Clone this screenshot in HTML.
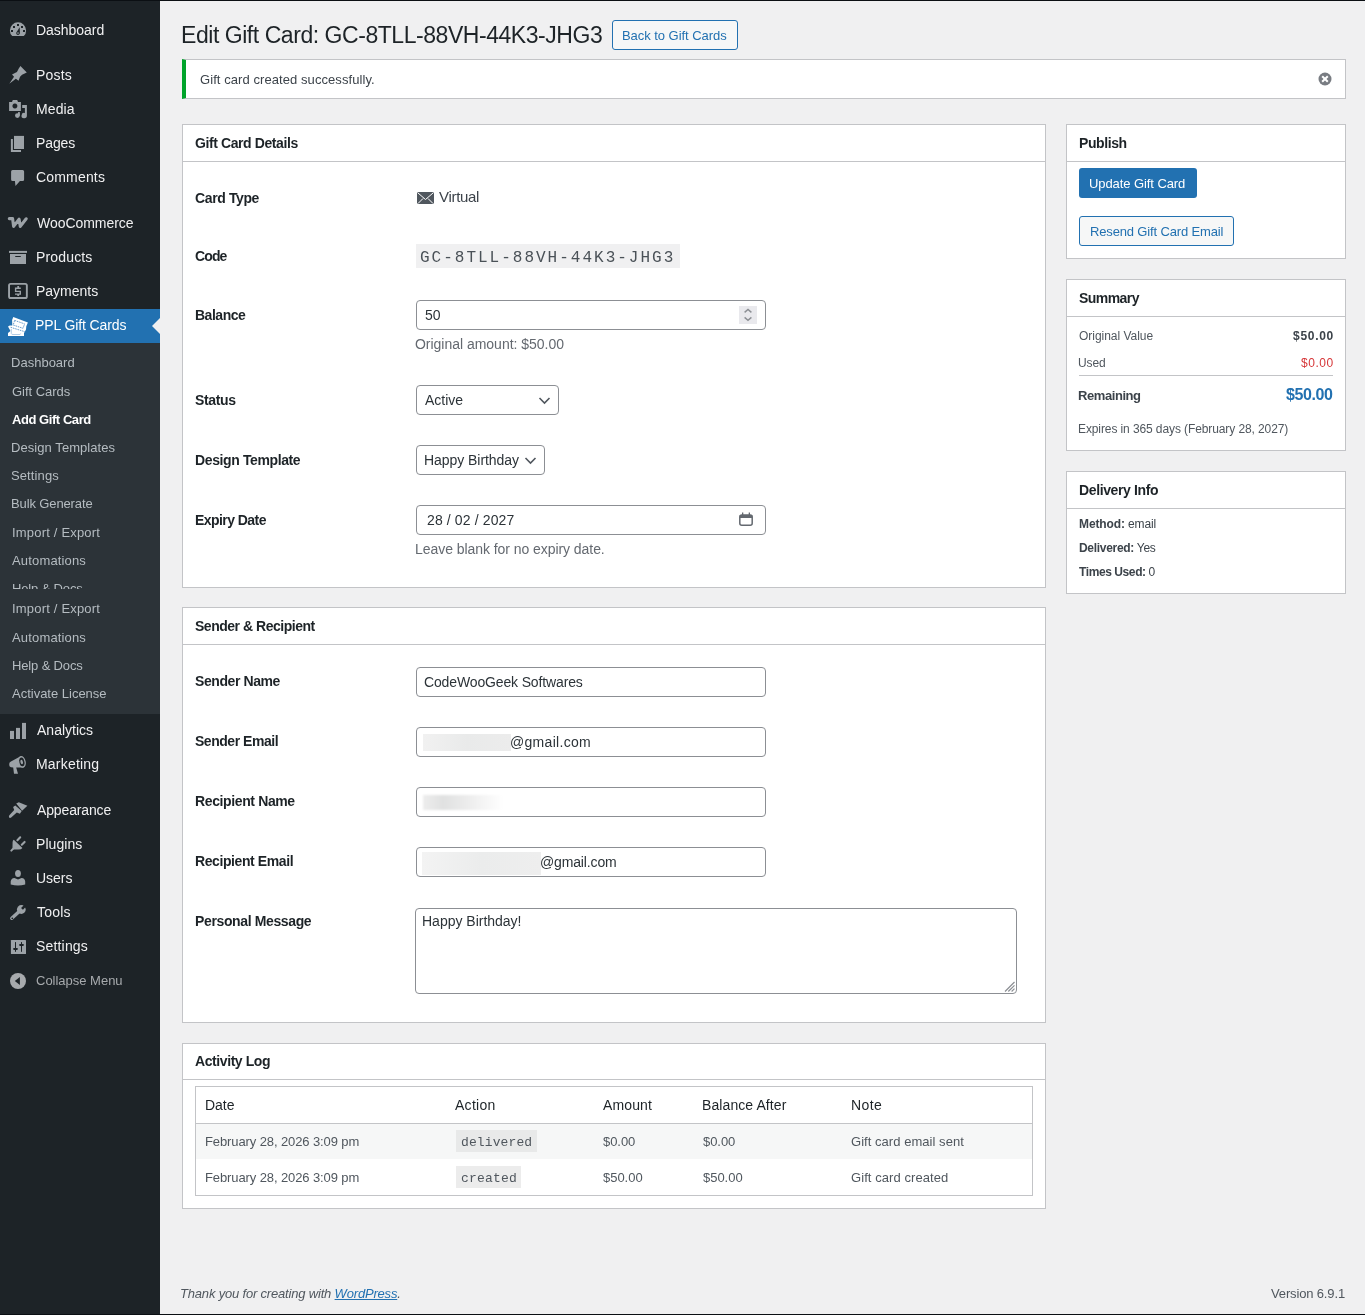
<!DOCTYPE html>
<html><head><meta charset="utf-8"><title>Edit Gift Card</title>
<style>
html,body{margin:0;padding:0}
body{width:1365px;height:1315px;position:relative;overflow:hidden;background:#f0f0f1;font-family:'Liberation Sans',sans-serif}
.t{position:absolute;white-space:nowrap}
.r{position:absolute;box-sizing:border-box}
#root{position:absolute;left:0;top:0;width:1365px;height:1315px;overflow:hidden;background:#f0f0f1;will-change:transform}
</style></head><body><div id="root">
<div class="r" style="left:0px;top:0px;width:160px;height:1315px;background:#1d2327"></div>
<div class="r" style="left:0px;top:309px;width:160px;height:34px;background:#2271b1"></div>
<svg class="r" style="left:152px;top:318px" width="8" height="16" viewBox="0 0 8 16"><path d="M8 0 L0 8 L8 16Z" fill="#f0f0f1"/></svg>
<div class="r" style="left:0px;top:343px;width:160px;height:371px;background:#2c3338"></div>
<div class="t" style="left:36px;top:20px;font:normal 14px/20px 'Liberation Sans',sans-serif;color:#f0f0f1;letter-spacing:-0.024px;">Dashboard</div>
<div class="t" style="left:36px;top:65px;font:normal 14px/20px 'Liberation Sans',sans-serif;color:#f0f0f1;letter-spacing:0.182px;">Posts</div>
<div class="t" style="left:36px;top:99px;font:normal 14px/20px 'Liberation Sans',sans-serif;color:#f0f0f1;letter-spacing:0.115px;">Media</div>
<div class="t" style="left:36px;top:133px;font:normal 14px/20px 'Liberation Sans',sans-serif;color:#f0f0f1;letter-spacing:-0.096px;">Pages</div>
<div class="t" style="left:36px;top:167px;font:normal 14px/20px 'Liberation Sans',sans-serif;color:#f0f0f1;letter-spacing:0.175px;">Comments</div>
<div class="t" style="left:37px;top:213px;font:normal 14px/20px 'Liberation Sans',sans-serif;color:#f0f0f1;letter-spacing:-0.051px;">WooCommerce</div>
<div class="t" style="left:36px;top:247px;font:normal 14px/20px 'Liberation Sans',sans-serif;color:#f0f0f1;letter-spacing:0.155px;">Products</div>
<div class="t" style="left:36px;top:281px;font:normal 14px/20px 'Liberation Sans',sans-serif;color:#f0f0f1;letter-spacing:-0.003px;">Payments</div>
<div class="t" style="left:37px;top:720px;font:normal 14px/20px 'Liberation Sans',sans-serif;color:#f0f0f1;letter-spacing:0.007px;">Analytics</div>
<div class="t" style="left:36px;top:754px;font:normal 14px/20px 'Liberation Sans',sans-serif;color:#f0f0f1;letter-spacing:0.201px;">Marketing</div>
<div class="t" style="left:37px;top:800px;font:normal 14px/20px 'Liberation Sans',sans-serif;color:#f0f0f1;letter-spacing:-0.139px;">Appearance</div>
<div class="t" style="left:36px;top:834px;font:normal 14px/20px 'Liberation Sans',sans-serif;color:#f0f0f1;letter-spacing:0.055px;">Plugins</div>
<div class="t" style="left:36px;top:868px;font:normal 14px/20px 'Liberation Sans',sans-serif;color:#f0f0f1;letter-spacing:-0.034px;">Users</div>
<div class="t" style="left:37px;top:902px;font:normal 14px/20px 'Liberation Sans',sans-serif;color:#f0f0f1;letter-spacing:0.216px;">Tools</div>
<div class="t" style="left:36px;top:936px;font:normal 14px/20px 'Liberation Sans',sans-serif;color:#f0f0f1;letter-spacing:0.173px;">Settings</div>
<div class="t" style="left:35px;top:315px;font:normal 14px/20px 'Liberation Sans',sans-serif;color:#fff;letter-spacing:-0.099px;">PPL Gift Cards</div>
<div class="t" style="left:36px;top:971px;font:normal 13px/20px 'Liberation Sans',sans-serif;color:#a7aaad;letter-spacing:-0.01px;">Collapse Menu</div>
<div class="t" style="left:11px;top:353px;font:normal 13px/20px 'Liberation Sans',sans-serif;color:#b5bcc1;letter-spacing:0.011px;">Dashboard</div>
<div class="t" style="left:12px;top:382px;font:normal 13px/20px 'Liberation Sans',sans-serif;color:#b5bcc1;letter-spacing:-0.04px;">Gift Cards</div>
<div class="t" style="left:12px;top:410px;font:bold 13px/20px 'Liberation Sans',sans-serif;color:#fff;letter-spacing:-0.441px;">Add Gift Card</div>
<div class="t" style="left:11px;top:438px;font:normal 13px/20px 'Liberation Sans',sans-serif;color:#b5bcc1;letter-spacing:0.067px;">Design Templates</div>
<div class="t" style="left:11px;top:466px;font:normal 13px/20px 'Liberation Sans',sans-serif;color:#b5bcc1;letter-spacing:0.106px;">Settings</div>
<div class="t" style="left:11px;top:494px;font:normal 13px/20px 'Liberation Sans',sans-serif;color:#b5bcc1;letter-spacing:-0.12px;">Bulk Generate</div>
<div class="t" style="left:12px;top:523px;font:normal 13px/20px 'Liberation Sans',sans-serif;color:#b5bcc1;letter-spacing:0.19px;">Import / Export</div>
<div class="t" style="left:12px;top:551px;font:normal 13px/20px 'Liberation Sans',sans-serif;color:#b5bcc1;letter-spacing:0.161px;">Automations</div>
<div class="t" style="left:12px;top:599px;font:normal 13px/20px 'Liberation Sans',sans-serif;color:#b5bcc1;letter-spacing:0.19px;">Import / Export</div>
<div class="t" style="left:12px;top:628px;font:normal 13px/20px 'Liberation Sans',sans-serif;color:#b5bcc1;letter-spacing:0.161px;">Automations</div>
<div class="t" style="left:12px;top:656px;font:normal 13px/20px 'Liberation Sans',sans-serif;color:#b5bcc1;letter-spacing:-0.144px;">Help &amp; Docs</div>
<div class="t" style="left:12px;top:684px;font:normal 13px/20px 'Liberation Sans',sans-serif;color:#b5bcc1;letter-spacing:-0.006px;">Activate License</div>
<div class="r" style="left:0;top:575px;width:160px;height:14px;overflow:hidden">
<div class="t" style="left:12px;top:4px;font:normal 13px/20px 'Liberation Sans',sans-serif;color:#b5bcc1;letter-spacing:-0.144px;">Help &amp; Docs</div>
</div>
<svg class="r" style="left:0;top:0" width="160" height="1000" viewBox="0 0 160 1000">
<path d="M12.2 36.1 A8.1 8.1 0 1 1 23.8 36.1 Z" fill="#9ca2a7"/>
<rect x="11" y="30" width="2" height="2" fill="#1d2327"/><rect x="13" y="26" width="2" height="2" fill="#1d2327"/>
<rect x="17" y="24" width="2" height="2" fill="#1d2327"/><rect x="21" y="26" width="2" height="2" fill="#1d2327"/><rect x="23" y="30" width="2" height="2" fill="#1d2327"/>
<path d="M19.7 27.2 L19.9 33.2 Q19.5 35 18 35 Q16.3 35 16.2 33.2 Q16.3 32.2 17 31.4 Z" fill="#1d2327"/><circle cx="18" cy="33.1" r="0.8" fill="#9ca2a7"/>
<path d="M20.42 66.1 L26.8 72.49 L22.06 74.68 L20.05 76.87 L18.59 80.7 L15.85 78.69 L9.3 83.7 L14.03 76.87 L12.02 74.4 L16.95 72.12 L18.77 68.47 Z" fill="#9ca2a7"/>
<path d="M9.1 102.1 L12 102.1 L12.8 100.1 L17.2 100.1 L18 102.1 L20.9 102.1 L20.9 110.9 L9.1 110.9 Z M14.9 103.4 A2.5 2.5 0 1 0 14.91 103.4 Z" fill="#9ca2a7" fill-rule="evenodd"/>
<path d="M22.2 105 L26.9 105 L26.9 115.6 A2.7 2.7 0 1 1 24.9 113 L24.9 108 L22.2 108 Z" fill="#9ca2a7"/>
<circle cx="17.4" cy="115.6" r="2.4" fill="#9ca2a7"/><rect x="18" y="112.1" width="1.9" height="3.5" fill="#9ca2a7"/>
<rect x="14" y="135.9" width="10" height="13.1" fill="#9ca2a7"/><path d="M10.9 138.9 L12.9 138.9 L12.9 150 L21 150 L21 152 L10.9 152 Z" fill="#9ca2a7"/>
<path d="M12.6 169.9 L22.6 169.9 Q24.1 169.9 24.1 171.4 L24.1 179.4 Q24.1 180.9 22.6 180.9 L19.9 180.9 L15.5 185.9 L14.9 180.9 L12.6 180.9 Q11.1 180.9 11.1 179.4 L11.1 171.4 Q11.1 169.9 12.6 169.9 Z" fill="#9ca2a7"/>
<path d="M9.3 218.6 L12.6 218.6 L13.6 226.4 L19.1 219.2 L20.3 226.4 L26.2 218.8" stroke="#9ca2a7" stroke-width="3.1" fill="none" stroke-linecap="round" stroke-linejoin="round"/>
<rect x="9" y="250.9" width="18" height="2" fill="#9ca2a7"/><rect x="10" y="254" width="16" height="10" fill="#9ca2a7"/><rect x="15.1" y="256" width="5.8" height="1.1" rx="0.5" fill="#1d2327"/>
<rect x="9.05" y="283.85" width="17.8" height="14.2" rx="1.6" fill="none" stroke="#9ca2a7" stroke-width="1.9"/>
<path d="M20.8 288.2 L15.6 288.2 L15.6 291.4 L20.3 291.4 L20.3 294.1 L15 294.1" stroke="#9ca2a7" stroke-width="1.4" fill="none"/>
<rect x="17.3" y="286" width="1.8" height="2" fill="#9ca2a7"/><rect x="17.3" y="294" width="1.8" height="2" fill="#9ca2a7"/>
<path d="M13.3 317.1 L27.9 322.6 L26.3 326.2 L26 329.5 L24.5 332.3 L24 333 L24 336 L8 336 L8 333 L10.5 331 L8 326.6 L9.8 325.6 L12.3 325.5 L12.1 320 Z" fill="#fff"/>
<path d="M14.6 320.4 L24.6 323.9 L23 328.3 L13.2 325 Z" fill="none" stroke="#5b93c7" stroke-width="0.9" stroke-dasharray="1.6 0.8"/>
<path d="M10.6 327.3 L25.2 331.8" stroke="#5b93c7" stroke-width="0.9" stroke-dasharray="1.6 0.8"/>
<path d="M11.3 329 L11.3 333.5 Q11.5 334.5 13 334.5 L20 334.5 Q20.5 334.3 20.6 333.6" fill="none" stroke="#a9c6e2" stroke-width="0.9"/>
<rect x="10" y="730.9" width="4" height="8.1" fill="#9ca2a7"/><rect x="16" y="727.9" width="4" height="11.1" fill="#9ca2a7"/><rect x="22" y="722.9" width="4" height="16.1" fill="#9ca2a7"/>
<path d="M9.4 763 Q9.6 762 11 761.4 L20.6 756.3 L23.6 767.6 L16.2 767.5 L18 773.8 L14 773.8 L13.2 767.4 L11 767.2 Q9.3 766.8 9.2 765 Z" fill="#9ca2a7"/>
<ellipse cx="22" cy="761.9" rx="3.7" ry="6" transform="rotate(-12 22 761.9)" fill="#9ca2a7"/>
<ellipse cx="21.9" cy="761.9" rx="2.5" ry="4.4" transform="rotate(-12 21.9 761.9)" fill="#1d2327"/>
<ellipse cx="21.7" cy="761.9" rx="1.2" ry="2.3" transform="rotate(-12 21.7 761.9)" fill="#9ca2a7"/>
<path d="M16.2 803.5 L18.8 802.2 L27.4 805.7 L22.1 810.8 Z" fill="#9ca2a7"/>
<path d="M13.1 807.1 L15.3 805.4 L21.7 811 L19.9 813.7 L16.8 812.6 L11.2 817.6 Q9.6 818.4 9 817.2 Q8.6 816 9.6 815 L14.2 810 Z" fill="#9ca2a7"/>
<path d="M13.8 839.7 L22.4 847.9 Q21.4 849.4 18.5 849.6 L13 849.6 Q12.4 849 12.5 847 L12.6 842 Q12.8 840.3 13.8 839.7 Z" fill="#9ca2a7"/>
<path d="M13.2 848.6 L11.3 850.6" stroke="#9ca2a7" stroke-width="2" stroke-linecap="round"/>
<path d="M17.4 840.2 L20.2 837.3 M21.8 844.7 L24.6 841.9" stroke="#9ca2a7" stroke-width="2.1" stroke-linecap="round"/>
<ellipse cx="18" cy="873.5" rx="2.9" ry="3.5" fill="#9ca2a7"/>
<path d="M10.7 884.6 L10.7 881.5 Q11 878.2 14.5 877.9 L18 879.6 L21.5 877.9 Q25 878.2 25.2 881.5 L25.2 884.6 Q18 886.4 10.7 884.6 Z" fill="#9ca2a7"/>
<path d="M11.8 918.3 L19.2 911.5" stroke="#9ca2a7" stroke-width="3.4" stroke-linecap="round"/>
<circle cx="21.3" cy="909.5" r="4.4" fill="#9ca2a7"/>
<path d="M21.08 907.88 L24.3 904.66 L26.14 906.5 L22.92 909.72 Z" fill="#1d2327"/>
<circle cx="12.3" cy="918.3" r="0.9" fill="#1d2327"/>
<rect x="10.9" y="939.9" width="15.1" height="14.1" rx="0.6" fill="#9ca2a7"/>
<rect x="15" y="942.1" width="1" height="9.7" fill="#1d2327"/><rect x="13.1" y="948.1" width="4.8" height="1.8" rx="0.8" fill="#1d2327"/>
<rect x="21" y="942.1" width="1" height="9.7" fill="#1d2327"/><rect x="19.1" y="944.1" width="4.8" height="1.8" rx="0.8" fill="#1d2327"/>
<circle cx="18" cy="981" r="8" fill="#a7aaad"/><path d="M14.8 981 L19.9 977 L19.9 984.9 Z" fill="#1d2327"/>
</svg>
<div class="r" style="left:0px;top:0px;width:1365px;height:1px;background:#0b0f13"></div>
<div class="r" style="left:0px;top:1314px;width:1365px;height:1px;background:#0b0f13"></div>
<div class="t" style="left:181px;top:25px;font:normal 23px/20px 'Liberation Sans',sans-serif;color:#1d2327;letter-spacing:-0.451px;">Edit Gift Card: GC-8TLL-88VH-44K3-JHG3</div>
<div class="r" style="left:612px;top:20px;width:126px;height:30px;border:1px solid #2271b1;border-radius:3px;background:#f6f7f7"></div>
<div class="t" style="left:622px;top:26px;font:normal 13px/20px 'Liberation Sans',sans-serif;color:#2271b1;letter-spacing:-0.049px;">Back to Gift Cards</div>
<div class="r" style="left:182px;top:59px;width:1164px;height:40px;background:#fff;border:1px solid #c3c4c7;border-left:4px solid #00a32a"></div>
<div class="t" style="left:200px;top:70px;font:normal 13px/20px 'Liberation Sans',sans-serif;color:#3c434a;letter-spacing:0.073px;">Gift card created successfully.</div>
<svg class="r" style="left:1318px;top:72px" width="14" height="14" viewBox="0 0 14 14"><circle cx="7" cy="7" r="6.5" fill="#787c82"/><path d="M4.2 4.2 L9.8 9.8 M9.8 4.2 L4.2 9.8" stroke="#fff" stroke-width="2"/></svg>
<div class="r" style="left:182px;top:124px;width:864px;height:464px;background:#fff;border:1px solid #c3c4c7"></div>
<div class="r" style="left:182px;top:161px;width:864px;height:1px;background:#c3c4c7"></div>
<div class="t" style="left:195px;top:133px;font:bold 14px/20px 'Liberation Sans',sans-serif;color:#1d2327;letter-spacing:-0.406px;">Gift Card Details</div>
<div class="t" style="left:195px;top:188px;font:bold 14px/20px 'Liberation Sans',sans-serif;color:#1d2327;letter-spacing:-0.382px;">Card Type</div>
<div class="t" style="left:195px;top:246px;font:bold 14px/20px 'Liberation Sans',sans-serif;color:#1d2327;letter-spacing:-0.863px;">Code</div>
<div class="t" style="left:195px;top:305px;font:bold 14px/20px 'Liberation Sans',sans-serif;color:#1d2327;letter-spacing:-0.486px;">Balance</div>
<div class="t" style="left:195px;top:390px;font:bold 14px/20px 'Liberation Sans',sans-serif;color:#1d2327;letter-spacing:-0.373px;">Status</div>
<div class="t" style="left:195px;top:450px;font:bold 14px/20px 'Liberation Sans',sans-serif;color:#1d2327;letter-spacing:-0.383px;">Design Template</div>
<div class="t" style="left:195px;top:510px;font:bold 14px/20px 'Liberation Sans',sans-serif;color:#1d2327;letter-spacing:-0.557px;">Expiry Date</div>
<svg class="r" style="left:417px;top:192px" width="17" height="12" viewBox="0 0 17 12"><rect x="0" y="0" width="17" height="12" rx="1.5" fill="#50575e"/><path d="M1 1 L8.5 7.5 L16 1 M1 11.5 L6 6.5 M16 11.5 L11 6.5" stroke="#fff" stroke-width="1" fill="none"/></svg>
<div class="t" style="left:439px;top:187px;font:normal 15px/20px 'Liberation Sans',sans-serif;color:#3c434a;letter-spacing:-0.31px;">Virtual</div>
<div class="r" style="left:416px;top:244px;width:264px;height:24px;background:#f0f0f1"></div>
<div class="t" style="left:420px;top:248px;font:normal 16px/20px 'Liberation Mono',monospace;color:#4a5157;letter-spacing:2px">GC-8TLL-88VH-44K3-JHG3</div>
<div class="r" style="left:416px;top:300px;width:350px;height:30px;background:#fff;border:1px solid #8c8f94;border-radius:4px"></div>
<div class="t" style="left:425px;top:305px;font:normal 14px/20px 'Liberation Sans',sans-serif;color:#2c3338;">50</div>
<div class="r" style="left:739px;top:306px;width:18px;height:18px;background:#e9e9ed"></div>
<svg class="r" style="left:739px;top:306px" width="18" height="18" viewBox="0 0 18 18"><path d="M5.6 6.4 L9 3.5 L12.4 6.4 M5.6 11.4 L9 14.3 L12.4 11.4" stroke="#8c8f94" stroke-width="1.4" fill="none"/></svg>
<div class="t" style="left:415px;top:334px;font:normal 14px/20px 'Liberation Sans',sans-serif;color:#646970;letter-spacing:-0.021px;">Original amount: $50.00</div>
<div class="r" style="left:416px;top:385px;width:143px;height:30px;background:#fff;border:1px solid #8c8f94;border-radius:4px"></div>
<div class="t" style="left:425px;top:390px;font:normal 14px/20px 'Liberation Sans',sans-serif;color:#2c3338;">Active</div>
<svg class="r" style="left:538px;top:396px" width="13" height="9" viewBox="0 0 13 9"><path d="M1.5 2 L6.5 7 L11.5 2" stroke="#50575e" stroke-width="1.6" fill="none"/></svg>
<div class="r" style="left:416px;top:445px;width:129px;height:30px;background:#fff;border:1px solid #8c8f94;border-radius:4px"></div>
<div class="t" style="left:424px;top:450px;font:normal 14px/20px 'Liberation Sans',sans-serif;color:#2c3338;letter-spacing:-0.052px;">Happy Birthday</div>
<svg class="r" style="left:524px;top:456px" width="13" height="9" viewBox="0 0 13 9"><path d="M1.5 2 L6.5 7 L11.5 2" stroke="#50575e" stroke-width="1.6" fill="none"/></svg>
<div class="r" style="left:416px;top:505px;width:350px;height:30px;background:#fff;border:1px solid #8c8f94;border-radius:4px"></div>
<div class="t" style="left:427px;top:510px;font:normal 14px/20px 'Liberation Sans',sans-serif;color:#2c3338;letter-spacing:0.124px;">28 / 02 / 2027</div>
<svg class="r" style="left:739px;top:512px" width="14" height="14" viewBox="0 0 14 14"><rect x="0.8" y="3" width="12.4" height="10.2" rx="2" fill="none" stroke="#646970" stroke-width="1.5"/><rect x="0.8" y="3" width="12.4" height="3" fill="#646970"/><rect x="3" y="0.5" width="1.3" height="3" fill="#646970"/><rect x="9.7" y="0.5" width="1.3" height="3" fill="#646970"/></svg>
<div class="t" style="left:415px;top:539px;font:normal 14px/20px 'Liberation Sans',sans-serif;color:#646970;letter-spacing:-0.057px;">Leave blank for no expiry date.</div>
<div class="r" style="left:182px;top:607px;width:864px;height:416px;background:#fff;border:1px solid #c3c4c7"></div>
<div class="r" style="left:182px;top:644px;width:864px;height:1px;background:#c3c4c7"></div>
<div class="t" style="left:195px;top:616px;font:bold 14px/20px 'Liberation Sans',sans-serif;color:#1d2327;letter-spacing:-0.479px;">Sender &amp; Recipient</div>
<div class="t" style="left:195px;top:671px;font:bold 14px/20px 'Liberation Sans',sans-serif;color:#1d2327;letter-spacing:-0.413px;">Sender Name</div>
<div class="t" style="left:195px;top:731px;font:bold 14px/20px 'Liberation Sans',sans-serif;color:#1d2327;letter-spacing:-0.47px;">Sender Email</div>
<div class="t" style="left:195px;top:791px;font:bold 14px/20px 'Liberation Sans',sans-serif;color:#1d2327;letter-spacing:-0.375px;">Recipient Name</div>
<div class="t" style="left:195px;top:851px;font:bold 14px/20px 'Liberation Sans',sans-serif;color:#1d2327;letter-spacing:-0.41px;">Recipient Email</div>
<div class="t" style="left:195px;top:911px;font:bold 14px/20px 'Liberation Sans',sans-serif;color:#1d2327;letter-spacing:-0.368px;">Personal Message</div>
<div class="r" style="left:416px;top:667px;width:350px;height:30px;background:#fff;border:1px solid #8c8f94;border-radius:4px"></div>
<div class="r" style="left:416px;top:727px;width:350px;height:30px;background:#fff;border:1px solid #8c8f94;border-radius:4px"></div>
<div class="r" style="left:416px;top:787px;width:350px;height:30px;background:#fff;border:1px solid #8c8f94;border-radius:4px"></div>
<div class="r" style="left:416px;top:847px;width:350px;height:30px;background:#fff;border:1px solid #8c8f94;border-radius:4px"></div>
<div class="t" style="left:424px;top:672px;font:normal 14px/20px 'Liberation Sans',sans-serif;color:#2c3338;letter-spacing:-0.14px;">CodeWooGeek Softwares</div>
<div class="r" style="left:423px;top:734px;width:88px;height:17px;background:linear-gradient(90deg,#f1f1f1,#e9eaea 50%,#ececec);filter:blur(0.6px)"></div>
<div class="t" style="left:510px;top:732px;font:normal 14px/20px 'Liberation Sans',sans-serif;color:#2c3338;letter-spacing:0.308px;">@gmail.com</div>
<div class="r" style="left:423px;top:795px;width:80px;height:15px;background:linear-gradient(90deg,#ededed,#e0e1e1 25%,#ececec 55%,#fff 100%);filter:blur(1px)"></div>
<div class="r" style="left:422px;top:852px;width:119px;height:23px;background:linear-gradient(90deg,#f3f3f3,#ebecec 50%,#eeeeee);filter:blur(0.6px)"></div>
<div class="t" style="left:540px;top:852px;font:normal 14px/20px 'Liberation Sans',sans-serif;color:#2c3338;letter-spacing:-0.147px;">@gmail.com</div>
<div class="r" style="left:415px;top:908px;width:602px;height:86px;background:#fff;border:1px solid #8c8f94;border-radius:4px"></div>
<div class="t" style="left:422px;top:911px;font:normal 14px/20px 'Liberation Sans',sans-serif;color:#2c3338;letter-spacing:-0.008px;">Happy Birthday!</div>
<svg class="r" style="left:1003px;top:980px" width="12" height="12" viewBox="0 0 12 12"><path d="M11.5 2 L2 11.5 M11.5 5.3 L5.3 11.5 M11.5 8.6 L8.6 11.5" stroke="#8c8f94" stroke-width="1.2" fill="none"/></svg>
<div class="r" style="left:182px;top:1043px;width:864px;height:166px;background:#fff;border:1px solid #c3c4c7"></div>
<div class="r" style="left:182px;top:1079px;width:864px;height:1px;background:#c3c4c7"></div>
<div class="t" style="left:195px;top:1051px;font:bold 14px/20px 'Liberation Sans',sans-serif;color:#1d2327;letter-spacing:-0.416px;">Activity Log</div>
<div class="r" style="left:195px;top:1086px;width:838px;height:110px;border:1px solid #c3c4c7;background:#fff"></div>
<div class="r" style="left:196px;top:1123px;width:836px;height:1px;background:#c3c4c7"></div>
<div class="r" style="left:196px;top:1124px;width:836px;height:35px;background:#f6f7f7"></div>
<div class="t" style="left:205px;top:1095px;font:normal 14px/20px 'Liberation Sans',sans-serif;color:#1d2327;letter-spacing:-0.025px;">Date</div>
<div class="t" style="left:455px;top:1095px;font:normal 14px/20px 'Liberation Sans',sans-serif;color:#1d2327;letter-spacing:0.269px;">Action</div>
<div class="t" style="left:603px;top:1095px;font:normal 14px/20px 'Liberation Sans',sans-serif;color:#1d2327;letter-spacing:0.122px;">Amount</div>
<div class="t" style="left:702px;top:1095px;font:normal 14px/20px 'Liberation Sans',sans-serif;color:#1d2327;letter-spacing:0.091px;">Balance After</div>
<div class="t" style="left:851px;top:1095px;font:normal 14px/20px 'Liberation Sans',sans-serif;color:#1d2327;letter-spacing:0.441px;">Note</div>
<div class="t" style="left:205px;top:1132px;font:normal 13px/20px 'Liberation Sans',sans-serif;color:#50575e;letter-spacing:-0.106px;">February 28, 2026 3:09 pm</div>
<div class="r" style="left:456px;top:1130px;width:81px;height:22px;background:#e8e9e9"></div>
<div class="t" style="left:461px;top:1133px;font:normal 13px/20px 'Liberation Mono',monospace;color:#50575e;letter-spacing:0.11px;">delivered</div>
<div class="t" style="left:603px;top:1132px;font:normal 13px/20px 'Liberation Sans',sans-serif;color:#50575e;letter-spacing:-0.065px;">$0.00</div>
<div class="t" style="left:703px;top:1132px;font:normal 13px/20px 'Liberation Sans',sans-serif;color:#50575e;letter-spacing:-0.065px;">$0.00</div>
<div class="t" style="left:851px;top:1132px;font:normal 13px/20px 'Liberation Sans',sans-serif;color:#50575e;letter-spacing:0.044px;">Gift card email sent</div>
<div class="t" style="left:205px;top:1168px;font:normal 13px/20px 'Liberation Sans',sans-serif;color:#50575e;letter-spacing:-0.106px;">February 28, 2026 3:09 pm</div>
<div class="r" style="left:456px;top:1166px;width:65px;height:22px;background:#ececec"></div>
<div class="t" style="left:461px;top:1169px;font:normal 13px/20px 'Liberation Mono',monospace;color:#50575e;letter-spacing:0.209px;">created</div>
<div class="t" style="left:603px;top:1168px;font:normal 13px/20px 'Liberation Sans',sans-serif;color:#50575e;letter-spacing:-0.027px;">$50.00</div>
<div class="t" style="left:703px;top:1168px;font:normal 13px/20px 'Liberation Sans',sans-serif;color:#50575e;letter-spacing:-0.027px;">$50.00</div>
<div class="t" style="left:851px;top:1168px;font:normal 13px/20px 'Liberation Sans',sans-serif;color:#50575e;letter-spacing:0.077px;">Gift card created</div>
<div class="r" style="left:1066px;top:124px;width:280px;height:135px;background:#fff;border:1px solid #c3c4c7"></div>
<div class="r" style="left:1066px;top:161px;width:280px;height:1px;background:#c3c4c7"></div>
<div class="t" style="left:1079px;top:133px;font:bold 14px/20px 'Liberation Sans',sans-serif;color:#1d2327;letter-spacing:-0.398px;">Publish</div>
<div class="r" style="left:1079px;top:168px;width:118px;height:30px;background:#2271b1;border-radius:3px"></div>
<div class="t" style="left:1089px;top:174px;font:normal 13px/20px 'Liberation Sans',sans-serif;color:#fff;letter-spacing:-0.081px;">Update Gift Card</div>
<div class="r" style="left:1079px;top:216px;width:155px;height:30px;border:1px solid #2271b1;border-radius:3px;background:#f6f7f7"></div>
<div class="t" style="left:1090px;top:222px;font:normal 13px/20px 'Liberation Sans',sans-serif;color:#2271b1;letter-spacing:-0.15px;">Resend Gift Card Email</div>
<div class="r" style="left:1066px;top:279px;width:280px;height:172px;background:#fff;border:1px solid #c3c4c7"></div>
<div class="r" style="left:1066px;top:316px;width:280px;height:1px;background:#c3c4c7"></div>
<div class="t" style="left:1079px;top:288px;font:bold 14px/20px 'Liberation Sans',sans-serif;color:#1d2327;letter-spacing:-0.56px;">Summary</div>
<div class="t" style="left:1079px;top:326px;font:normal 12px/20px 'Liberation Sans',sans-serif;color:#50575e;letter-spacing:-0.03px;">Original Value</div>
<div class="t" style="left:1293px;top:326px;font:bold 12px/20px 'Liberation Sans',sans-serif;color:#3c434a;letter-spacing:0.719px;">$50.00</div>
<div class="t" style="left:1078px;top:353px;font:normal 12px/20px 'Liberation Sans',sans-serif;color:#50575e;letter-spacing:-0.135px;">Used</div>
<div class="t" style="left:1301px;top:353px;font:normal 12px/20px 'Liberation Sans',sans-serif;color:#d63638;letter-spacing:0.55px;">$0.00</div>
<div class="r" style="left:1079px;top:375px;width:254px;height:1px;background:#c3c4c7"></div>
<div class="t" style="left:1078px;top:386px;font:bold 13px/20px 'Liberation Sans',sans-serif;color:#3c434a;letter-spacing:-0.424px;">Remaining</div>
<div class="t" style="left:1286px;top:385px;font:bold 16px/20px 'Liberation Sans',sans-serif;color:#2271b1;letter-spacing:-0.428px;">$50.00</div>
<div class="t" style="left:1078px;top:419px;font:normal 12px/20px 'Liberation Sans',sans-serif;color:#50575e;letter-spacing:-0.101px;">Expires in 365 days (February 28, 2027)</div>
<div class="r" style="left:1066px;top:471px;width:280px;height:123px;background:#fff;border:1px solid #c3c4c7"></div>
<div class="r" style="left:1066px;top:508px;width:280px;height:1px;background:#c3c4c7"></div>
<div class="t" style="left:1079px;top:480px;font:bold 14px/20px 'Liberation Sans',sans-serif;color:#1d2327;letter-spacing:-0.371px;">Delivery Info</div>
<div class="t" style="left:1079px;top:514px;font:normal 12px/20px 'Liberation Sans',sans-serif;color:#3c434a;letter-spacing:-0.119px;"><b>Method:</b> email</div>
<div class="t" style="left:1079px;top:538px;font:normal 12px/20px 'Liberation Sans',sans-serif;color:#3c434a;letter-spacing:-0.306px;"><b>Delivered:</b> Yes</div>
<div class="t" style="left:1079px;top:562px;font:normal 12px/20px 'Liberation Sans',sans-serif;color:#3c434a;letter-spacing:-0.409px;"><b>Times Used:</b> 0</div>
<div class="t" style="left:180px;top:1284px;font:italic normal 13px/20px 'Liberation Sans',sans-serif;color:#50575e;letter-spacing:-0.182px;">Thank you for creating with <span style="color:#2271b1;text-decoration:underline">WordPress</span>.</div>
<div class="t" style="left:1271px;top:1284px;font:normal 13px/20px 'Liberation Sans',sans-serif;color:#50575e;letter-spacing:-0.148px;">Version 6.9.1</div>
</div></body></html>
